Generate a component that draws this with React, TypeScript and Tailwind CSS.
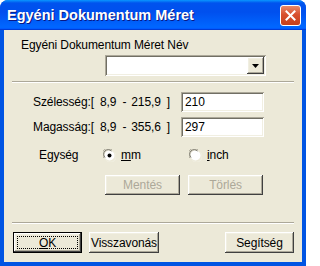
import React from "react";

const raised =
  "shadow-[inset_-1px_-1px_0_#404040,inset_1px_1px_0_#ffffff,inset_-2px_-2px_0_#aca899,inset_2px_2px_0_#f1efe2]";
const sunken =
  "shadow-[inset_1px_1px_0_#aca899,inset_-1px_-1px_0_#ffffff,inset_2px_2px_0_#716f64,inset_-2px_-2px_0_#f1efe2]";

function Radio({ checked }: { checked?: boolean }) {
  return (
    <svg width="13" height="13" viewBox="0 0 13 13" className="shrink-0">
      <path d="M1 9 A5.5 5.5 0 0 1 9 1" stroke="#aca899" strokeWidth="1" fill="none" />
      <circle cx="6.5" cy="6.5" r="5" fill="#ffffff" />
      <path d="M2 8.5 A4.5 4.5 0 0 1 8.5 2" stroke="#716f64" strokeWidth="1" fill="none" />
      <path d="M3.5 11.5 A5.5 5.5 0 0 0 11.5 3.5" stroke="#f1efe2" strokeWidth="1" fill="none" />
      {checked && <circle cx="6.5" cy="6.5" r="2" fill="#000000" />}
    </svg>
  );
}

function Separator({ className = "" }: { className?: string }) {
  return (
    <div className={`mx-[8px] ${className}`}>
      <div className="h-px bg-[#aca899]" />
      <div className="h-px bg-white" />
    </div>
  );
}

function Button({
  children,
  className = "",
  disabled,
}: {
  children: React.ReactNode;
  className?: string;
  disabled?: boolean;
}) {
  return (
    <div
      className={`flex items-center justify-center bg-[#ece9d8] ${raised} ${
        disabled ? "text-[#aca899]" : "text-black"
      } ${className}`}
    >
      {children}
    </div>
  );
}

function Range({ to }: { to: string }) {
  return (
    <span className="w-[81px] flex">
      <span>8,9</span>
      <span className="ml-[6px]">-</span>
      <span className="ml-[5px]">{to}</span>
      <span className="ml-[6px]">]</span>
    </span>
  );
}

export default function App() {
  return (
    <div
      className="w-[306px] h-[266px] flex flex-col rounded-t-[8px] bg-[#0054e3] overflow-hidden text-[12px] leading-[14px] tracking-[-0.1px] text-black"
      style={{ fontFamily: '"Liberation Sans", Arial, sans-serif' }}
    >
      {/* title bar */}
      <div className="h-[30px] shrink-0 flex items-center justify-between pl-[7px] pr-[5px] bg-[linear-gradient(to_bottom,#0997ff_0%,#0053ee_10%,#0050ee_40%,#0066ff_88%,#0066ff_93%,#005bff_95%,#003dd7_96%,#003dd7_100%)]">
        <span className="text-white font-bold text-[14.5px] tracking-normal [text-shadow:1px_1px_0_#0a1883]">
          Egyéni Dokumentum Méret
        </span>
        <div className="w-[21px] h-[21px] rounded-[3px] border border-white bg-[linear-gradient(to_bottom,#e8896a,#d8502e_45%,#c7401b)] flex items-center justify-center">
          <svg width="11" height="11" viewBox="0 0 11 11">
            <path d="M1.5 1.5 L9.5 9.5 M9.5 1.5 L1.5 9.5" stroke="#ffffff" strokeWidth="2" strokeLinecap="square" />
          </svg>
        </div>
      </div>

      {/* client */}
      <div className="flex-1 mx-[4px] mb-[4px] bg-[#ece9d8] flex flex-col">
        <div className="pl-[17px] pt-[8px]">Egyéni Dokumentum Méret Név</div>

        <div className={`mt-[3px] ml-[101px] w-[161px] h-[21px] bg-white ${sunken} flex justify-end p-[2px]`}>
          <div className={`w-[17px] h-[17px] bg-[#ece9d8] ${raised} flex items-center justify-center`}>
            <svg width="7" height="4" viewBox="0 0 7 4">
              <path d="M0 0 H7 L3.5 4 Z" fill="#000" />
            </svg>
          </div>
        </div>

        <Separator className="mt-[5px]" />

        <div className="mt-[9px] h-[20px] flex items-center">
          <span className="ml-[29px] w-[67px]">Szélesség:[</span>
          <Range to="215,9" />
          <div className={`w-[83px] h-[20px] bg-white ${sunken} flex items-center pl-[4px]`}>210</div>
        </div>

        <div className="mt-[5px] h-[20px] flex items-center">
          <span className="ml-[29px] w-[67px]">Magasság:[</span>
          <Range to="355,6" />
          <div className={`w-[83px] h-[20px] bg-white ${sunken} flex items-center pl-[4px]`}>297</div>
        </div>

        <div className="mt-[10px] h-[16px] flex items-center">
          <span className="ml-[35px] w-[64px]">Egység</span>
          <div className="w-[86px] flex items-center gap-[5px]">
            <Radio checked />
            <span>
              <span className="underline">m</span>m
            </span>
          </div>
          <div className="flex items-center gap-[5px]">
            <Radio />
            <span>
              <span className="underline">i</span>nch
            </span>
          </div>
        </div>

        <div className="mt-[12px] h-[20px] flex">
          <Button disabled className="ml-[101px] w-[75px]">
            Mentés
          </Button>
          <Button disabled className="ml-[8px] w-[75px]">
            Törlés
          </Button>
        </div>

        <Separator className="mt-[27px]" />

        <div className="mt-[8px] h-[21px] flex">
          <div className="ml-[9px] w-[69px] h-[21px] border border-black">
            <Button className="w-full h-full p-[3px]">
              <div className="w-full h-full border border-dotted border-black flex items-center justify-center">
                <span>
                  <span className="underline">O</span>K
                </span>
              </div>
            </Button>
          </div>
          <Button className="ml-[7px] w-[70px]">Visszavonás</Button>
          <Button className="ml-[66px] w-[69px]">Segítség</Button>
        </div>
      </div>
    </div>
  );
}
